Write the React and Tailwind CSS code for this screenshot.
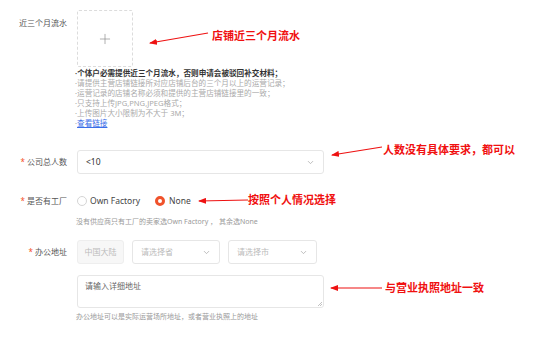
import { ChevronDown, Plus } from 'lucide-react'

const CJK = { fontFamily: '"Noto Sans", "Noto Sans CJK SC", sans-serif' }

const NOTES = [
  '·请提供主营店铺链接所对应店铺后台的三个月以上的运营记录；',
  '·运营记录的店铺名称必须和提供的主营店铺链接里的一致；',
  '·只支持上传JPG,PNG,JPEG格式；',
  '·上传图片大小限制为不大于 3M；',
]

function Label({ text, required }) {
  return (
    <div className="w-[67px] shrink-0 flex justify-end items-center h-6 text-[8px] text-[#555]">
      {required && <span className="text-[#f5502a] mr-[2px] text-[8px]">*</span>}
      {text}
    </div>
  )
}

function Arrow({ x1, y1, x2, y2 }) {
  return (
    <line x1={x1} y1={y1} x2={x2} y2={y2} stroke="#ee1111" strokeWidth="1.2" markerEnd="url(#head)" />
  )
}

export default function App() {
  return (
    <div className="relative w-[544px] h-[356px] bg-white overflow-hidden" style={CJK}>
      <div className="pt-[10px]">
        {/* 近三个月流水 */}
        <div className="flex gap-[10px]">
          <div className="w-[67px] shrink-0 flex justify-end pt-[7px] text-[8px] text-[#555] leading-[12px]">近三个月流水</div>
          <div>
            <div className="w-[56px] h-[57px] border border-dashed border-[#dcdcdc] rounded-[2px] flex items-center justify-center">
              <Plus size={16} strokeWidth={1} className="text-[#888]" />
            </div>
            <div className="mt-[1px] -ml-[2px] text-[7.6px] leading-[10px] text-[#aaa] whitespace-nowrap">
              <p className="text-[#333] font-bold">·个体户必需提供近三个月流水，否则申请会被驳回补交材料；</p>
              {NOTES.map(n => <p key={n}>{n}</p>)}
              <p>·<span className="text-[#3a6ee8] underline">查看链接</span></p>
            </div>
          </div>
        </div>

        {/* 公司总人数 */}
        <div className="flex gap-[10px] mt-[22px]">
          <Label text="公司总人数" required />
          <div className="w-[247px] h-6 border border-[#e6e6e6] rounded-[3px] flex items-center justify-between pl-[8px] pr-[8px] text-[8.5px] text-[#333]">
            <span>&lt;10</span>
            <ChevronDown size={9} className="text-[#aaa]" />
          </div>
        </div>

        {/* 是否有工厂 */}
        <div className="flex gap-[10px] mt-[15px]">
          <Label text="是否有工厂" required />
          <div className="flex items-center h-6 text-[8.5px] text-[#444]">
            <span className="w-[10px] h-[10px] rounded-full border border-[#d5d5d5] mr-[3px]" />
            <span>Own Factory</span>
            <span className="w-[10px] h-[10px] rounded-full border-[3px] border-[#f0522b] ml-[15px] mr-[4px]" />
            <span>None</span>
          </div>
        </div>
        <p className="ml-[76px] mt-[4px] text-[7px] leading-[10px] text-[#999]">没有供应商只有工厂的卖家选Own Factory ， 其余选None</p>

        {/* 办公地址 */}
        <div className="flex gap-[10px] mt-[13px]">
          <Label text="办公地址" required />
          <div>
            <div className="flex gap-[8px] text-[8px]">
              <div className="w-[47px] h-6 rounded-[3px] border border-[#eee] bg-[#f7f7f7] flex items-center justify-center text-[#bbb]">中国大陆</div>
              <div className="w-[88px] h-6 rounded-[3px] border border-[#e6e6e6] flex items-center justify-between px-[8px] text-[#bbb]">
                <span>请选择省</span>
                <ChevronDown size={9} className="text-[#aaa]" />
              </div>
              <div className="w-[89px] h-6 rounded-[3px] border border-[#e6e6e6] flex items-center justify-between px-[8px] text-[#bbb]">
                <span>请选择市</span>
                <ChevronDown size={9} className="text-[#aaa]" />
              </div>
            </div>
            <div className="relative mt-[11px] w-[247px] h-[33px] rounded-[3px] border border-[#e6e6e6] px-[7px] pt-[4px] text-[8px] text-[#666]">
              请输入详细地址
              <svg className="absolute right-[1px] bottom-[1px]" width="5" height="5" viewBox="0 0 5 5">
                <path d="M1 5L5 1M3 5L5 3" stroke="#999" strokeWidth="0.6" />
              </svg>
            </div>
            <p className="-ml-[1px] mt-[4px] text-[7px] leading-[10px] text-[#999]">办公地址可以是实际运营场所地址，或者营业执照上的地址</p>
          </div>
        </div>
      </div>

      {/* annotations */}
      <svg className="absolute inset-0 pointer-events-none" width="544" height="356">
        <defs>
          <marker id="head" markerWidth="8" markerHeight="6" refX="7" refY="3" orient="auto" markerUnits="userSpaceOnUse">
            <path d="M0 0L8 3L0 6z" fill="#ee1111" />
          </marker>
        </defs>
        <Arrow x1={208} y1={33} x2={150} y2={43} />
        <Arrow x1={382} y1={147} x2={332} y2={155} />
        <Arrow x1={248} y1={200} x2={199} y2={201} />
        <Arrow x1={382} y1={288} x2={331} y2={288} />
      </svg>
      <div className="absolute left-[212px] top-[29px] text-[11px] leading-[14px] font-bold text-[#f01010]">店铺近三个月流水</div>
      <div className="absolute left-[383px] top-[143px] text-[11px] leading-[14px] font-bold text-[#f01010]">人数没有具体要求，都可以</div>
      <div className="absolute left-[248px] top-[193px] text-[11px] leading-[14px] font-bold text-[#f01010]">按照个人情况选择</div>
      <div className="absolute left-[385px] top-[281px] text-[11px] leading-[14px] font-bold text-[#f01010]">与营业执照地址一致</div>
    </div>
  )
}
